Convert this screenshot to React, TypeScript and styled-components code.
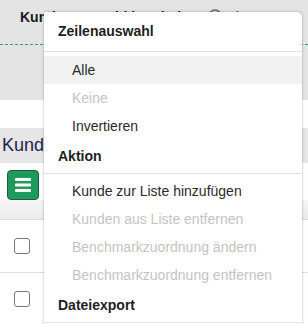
import styled, { createGlobalStyle } from "styled-components";

const GlobalStyle = createGlobalStyle`
  html, body {
    margin: 0;
    padding: 0;
    background: #ffffff;
    font-family: "Liberation Sans", Arial, sans-serif;
    overflow: hidden;
  }
`;

type Item = { label: string; disabled?: boolean; active?: boolean };
type Section = { title: string; items: Item[] };

const sections: Section[] = [
  {
    title: "Zeilenauswahl",
    items: [
      { label: "Alle", active: true },
      { label: "Keine", disabled: true },
      { label: "Invertieren" },
    ],
  },
  {
    title: "Aktion",
    items: [
      { label: "Kunde zur Liste hinzufügen" },
      { label: "Kunden aus Liste entfernen", disabled: true },
      { label: "Benchmarkzuordnung ändern", disabled: true },
      { label: "Benchmarkzuordnung entfernen", disabled: true },
    ],
  },
  { title: "Dateiexport", items: [] },
];

const HamburgerIcon = () => (
  <svg width="16" height="14" viewBox="0 0 16 14">
    <rect x="0" y="0" width="16" height="3" rx="1" fill="#fff" />
    <rect x="0" y="5.5" width="16" height="3" rx="1" fill="#fff" />
    <rect x="0" y="11" width="16" height="3" rx="1" fill="#fff" />
  </svg>
);

const InfoIcon = () => (
  <svg width="14" height="14" viewBox="0 0 14 14">
    <circle cx="7" cy="7" r="6" fill="none" stroke="#666" strokeWidth="1.3" />
  </svg>
);

const App = () => (
  <Page>
    <GlobalStyle />
    <TopBar>
      <TitleRow>
        <Title>Kundenauswahl bearbeiten</Title>
        <InfoIcon />
        <TitleLink>Liste</TitleLink>
      </TitleRow>
    </TopBar>
    <Gap />
    <SectionHead>Kundenliste</SectionHead>
    <Toolbar>
      <MenuButton>
        <HamburgerIcon />
      </MenuButton>
    </Toolbar>
    <TableHead />
    <Row>
      <Checkbox />
    </Row>
    <Row>
      <Checkbox />
    </Row>

    <Menu>
      {sections.map((s, i) => (
        <div key={s.title}>
          <MenuHeader $first={i === 0}>{s.title}</MenuHeader>
          {s.items.length > 0 && (
            <ItemList $first={i === 0}>
              {s.items.map((it) => (
                <MenuItem key={it.label} $disabled={it.disabled} $active={it.active}>
                  {it.label}
                </MenuItem>
              ))}
            </ItemList>
          )}
        </div>
      ))}
    </Menu>
  </Page>
);

export default App;

const Page = styled.div`
  position: relative;
  width: 308px;
  height: 324px;
  overflow: hidden;
  background: #fff;
`;

const TopBar = styled.div`
  height: 100px;
  background: #e4e4e4;
`;

const TitleRow = styled.div`
  height: 45px;
  display: flex;
  align-items: flex-start;
  gap: 6px;
  padding: 9px 0 0 20px;
  box-sizing: border-box;
  border-bottom: 1px dashed #2f9f78;
`;

const Title = styled.span`
  font-size: 14px;
  font-weight: bold;
  color: #1b1b1b;
  line-height: 16px;
`;

const TitleLink = styled.span`
  font-size: 14px;
  color: #333;
  line-height: 16px;
`;

const Gap = styled.div`
  height: 28px;
`;

const SectionHead = styled.div`
  height: 35px;
  background: #e6e6e6;
  padding-left: 2px;
  font-size: 18px;
  line-height: 35px;
  color: #1f2247;
  white-space: nowrap;
`;

const Toolbar = styled.div`
  height: 37px;
  padding: 7px 0 0 7px;
  box-sizing: border-box;
`;

const MenuButton = styled.div`
  width: 32px;
  height: 30px;
  box-sizing: border-box;
  border: 1px solid #1c5e3e;
  border-radius: 4px;
  background: #1f9a5e;
  display: flex;
  align-items: center;
  justify-content: center;
`;

const TableHead = styled.div`
  height: 19px;
  background: linear-gradient(#f6f6f6, #ebebeb);
  border-bottom: 1px solid #dcdcdc;
`;

const Row = styled.div`
  height: 52px;
  display: flex;
  align-items: center;
  padding-left: 14px;
  border-bottom: 1px solid #dddddd;
`;

const Checkbox = styled.div`
  width: 14px;
  height: 14px;
  border: 1.5px solid #777;
  border-radius: 3px;
  background: #fff;
`;

const Menu = styled.div`
  position: absolute;
  left: 44px;
  top: 12px;
  width: 258px;
  height: 330px;
  background: #fff;
  border-radius: 0 5px 0 0;
  box-shadow: 0 0 3px rgba(0, 0, 0, 0.3);
`;

const MenuHeader = styled.div<{ $first?: boolean }>`
  padding: ${(p) => (p.$first ? "10px 14px 10px" : "7px 14px 7px")};
  font-size: 14px;
  line-height: 19px;
  font-weight: bold;
  color: #1e1e1e;
  border-bottom: 1px solid #e3e3e3;
`;

const ItemList = styled.div<{ $first?: boolean }>`
  padding-top: ${(p) => (p.$first ? "4px" : "3px")};
`;

const MenuItem = styled.div<{ $disabled?: boolean; $active?: boolean }>`
  height: 28px;
  line-height: 28px;
  padding-left: 28px;
  font-size: 14px;
  color: ${(p) => (p.$disabled ? "#c4c4c4" : "#2a2a2a")};
  background: ${(p) => (p.$active ? "#f2f2f2" : "transparent")};
`;
